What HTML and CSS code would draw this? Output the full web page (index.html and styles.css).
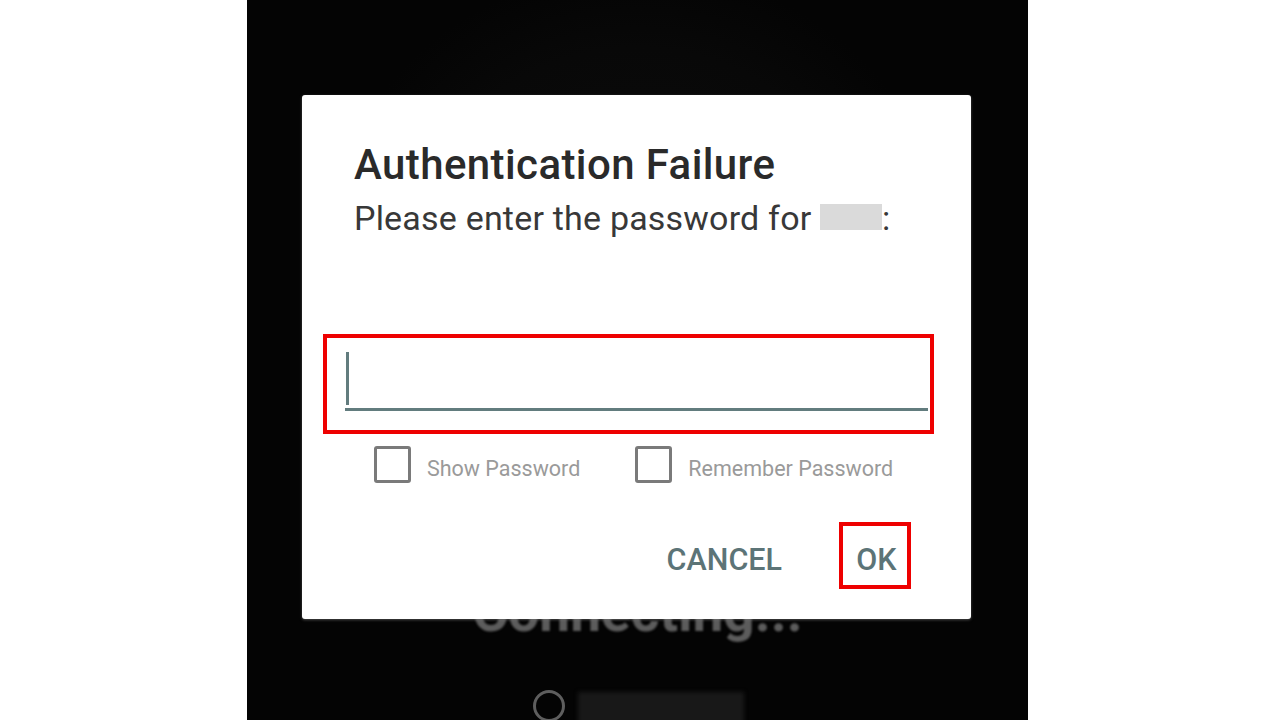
FILE: index.html
```html
<!DOCTYPE html>
<html lang="en">
<head>
    <meta charset="UTF-8">
    <meta name="viewport" content="width=device-width, initial-scale=1.0">
    <title>Authentication Failure</title>
    <link rel="stylesheet" href="styles.css">
</head>
<body>
    <div class="screen">
        <div class="backdrop">
            <p class="connecting">Connecting...</p>
            <div class="progress-row">
                <span class="spinner"></span>
                <span class="host-blur"></span>
            </div>
        </div>

        <div class="dialog">
            <h1 class="dialog-title">Authentication Failure</h1>
            <p class="dialog-message">Please enter the password for <span class="redacted"></span>:</p>

            <div class="password-field highlight">
                <div class="field-line">
                    <span class="cursor"></span>
                </div>
            </div>

            <div class="options">
                <label class="check">
                    <span class="check-box"></span>
                    <span class="check-label">Show Password</span>
                </label>
                <label class="check">
                    <span class="check-box"></span>
                    <span class="check-label">Remember Password</span>
                </label>
            </div>

            <div class="actions">
                <button class="text-button cancel">CANCEL</button>
                <button class="text-button highlight ok">OK</button>
            </div>
        </div>
    </div>
</body>
</html>
```

FILE: styles.css
```css
body {
    margin: 0;
    background: #ffffff;
    font-family: Roboto, "Noto Sans", sans-serif;
}
.screen {
    position: relative;
    margin-left: 247px;
    width: 781px;
    height: 720px;
    background: radial-gradient(ellipse 300px 260px at 390px 230px, #0c0c0c 0%, #080808 70%, #040404 100%);
    overflow: hidden;
}
.backdrop {
    display: flex;
    flex-direction: column;
    align-items: center;
    padding-top: 581px;
}
.connecting {
    margin: 0;
    font-size: 55px;
    font-weight: 700;
    line-height: 62px;
    color: #5c5c5c;
    filter: blur(1px);
}
.progress-row {
    display: flex;
    align-items: flex-start;
    gap: 13px;
    margin-top: 47px;
    margin-left: 2px;
}
.spinner {
    width: 32px;
    height: 32px;
    box-sizing: border-box;
    border: 3px solid #5e5e5e;
    border-radius: 50%;
    filter: blur(0.5px);
}
.host-blur {
    margin-top: 2px;
    width: 166px;
    height: 34px;
    background: #181818;
    filter: blur(2px);
}
.dialog {
    position: absolute;
    left: 55px;
    top: 95px;
    width: 669px;
    height: 524px;
    box-sizing: border-box;
    background: #ffffff;
    border-radius: 3px;
    box-shadow: 0 1px 3px rgba(120, 120, 120, 0.6);
    padding: 45px 37px 0 21px;
}
.dialog-title {
    margin: 0 0 0 31px;
    font-size: 42px;
    font-weight: 500;
    line-height: 50px;
    letter-spacing: 0.4px;
    color: #2a2a2a;
}
.dialog-message {
    margin: 6px 0 0 31px;
    font-size: 34px;
    line-height: 44px;
    letter-spacing: 0.2px;
    color: #383838;
}
.redacted {
    display: inline-block;
    width: 62px;
    height: 26px;
    background: #dadada;
    filter: blur(0.6px);
}
.highlight {
    border: 4px solid #ee0000;
}
.password-field {
    margin-top: 94px;
    width: 611px;
    height: 100px;
    box-sizing: border-box;
    padding: 14px 2px 0 18px;
}
.field-line {
    height: 56px;
    border-bottom: 3px solid #627c7e;
}
.cursor {
    display: block;
    margin-left: 1px;
    width: 3px;
    height: 53px;
    background: #627c7e;
}
.options {
    display: flex;
    align-items: center;
    gap: 55px;
    margin: 12px 0 0 51px;
}
.check {
    display: flex;
    align-items: center;
    gap: 16px;
}
.check-box {
    width: 37px;
    height: 37px;
    box-sizing: border-box;
    border: 3px solid #7a7a7a;
    border-radius: 3px;
}
.check-label {
    padding-top: 8px;
    font-size: 21.5px;
    color: #9a9a9a;
}
.actions {
    display: flex;
    justify-content: flex-end;
    align-items: flex-start;
    gap: 57px;
    margin-top: 39px;
    padding-right: 23px;
}
.text-button {
    background: none;
    border: none;
    padding: 0;
    font-family: Roboto, "Noto Sans", sans-serif;
    font-size: 30.5px;
    font-weight: 500;
    line-height: 36px;
    color: #5c7477;
}
.cancel {
    margin-top: 20px;
}
.ok {
    width: 72px;
    height: 67px;
    box-sizing: border-box;
    border: 4px solid #ee0000;
    padding: 8px 0 0 3px;
}
```
